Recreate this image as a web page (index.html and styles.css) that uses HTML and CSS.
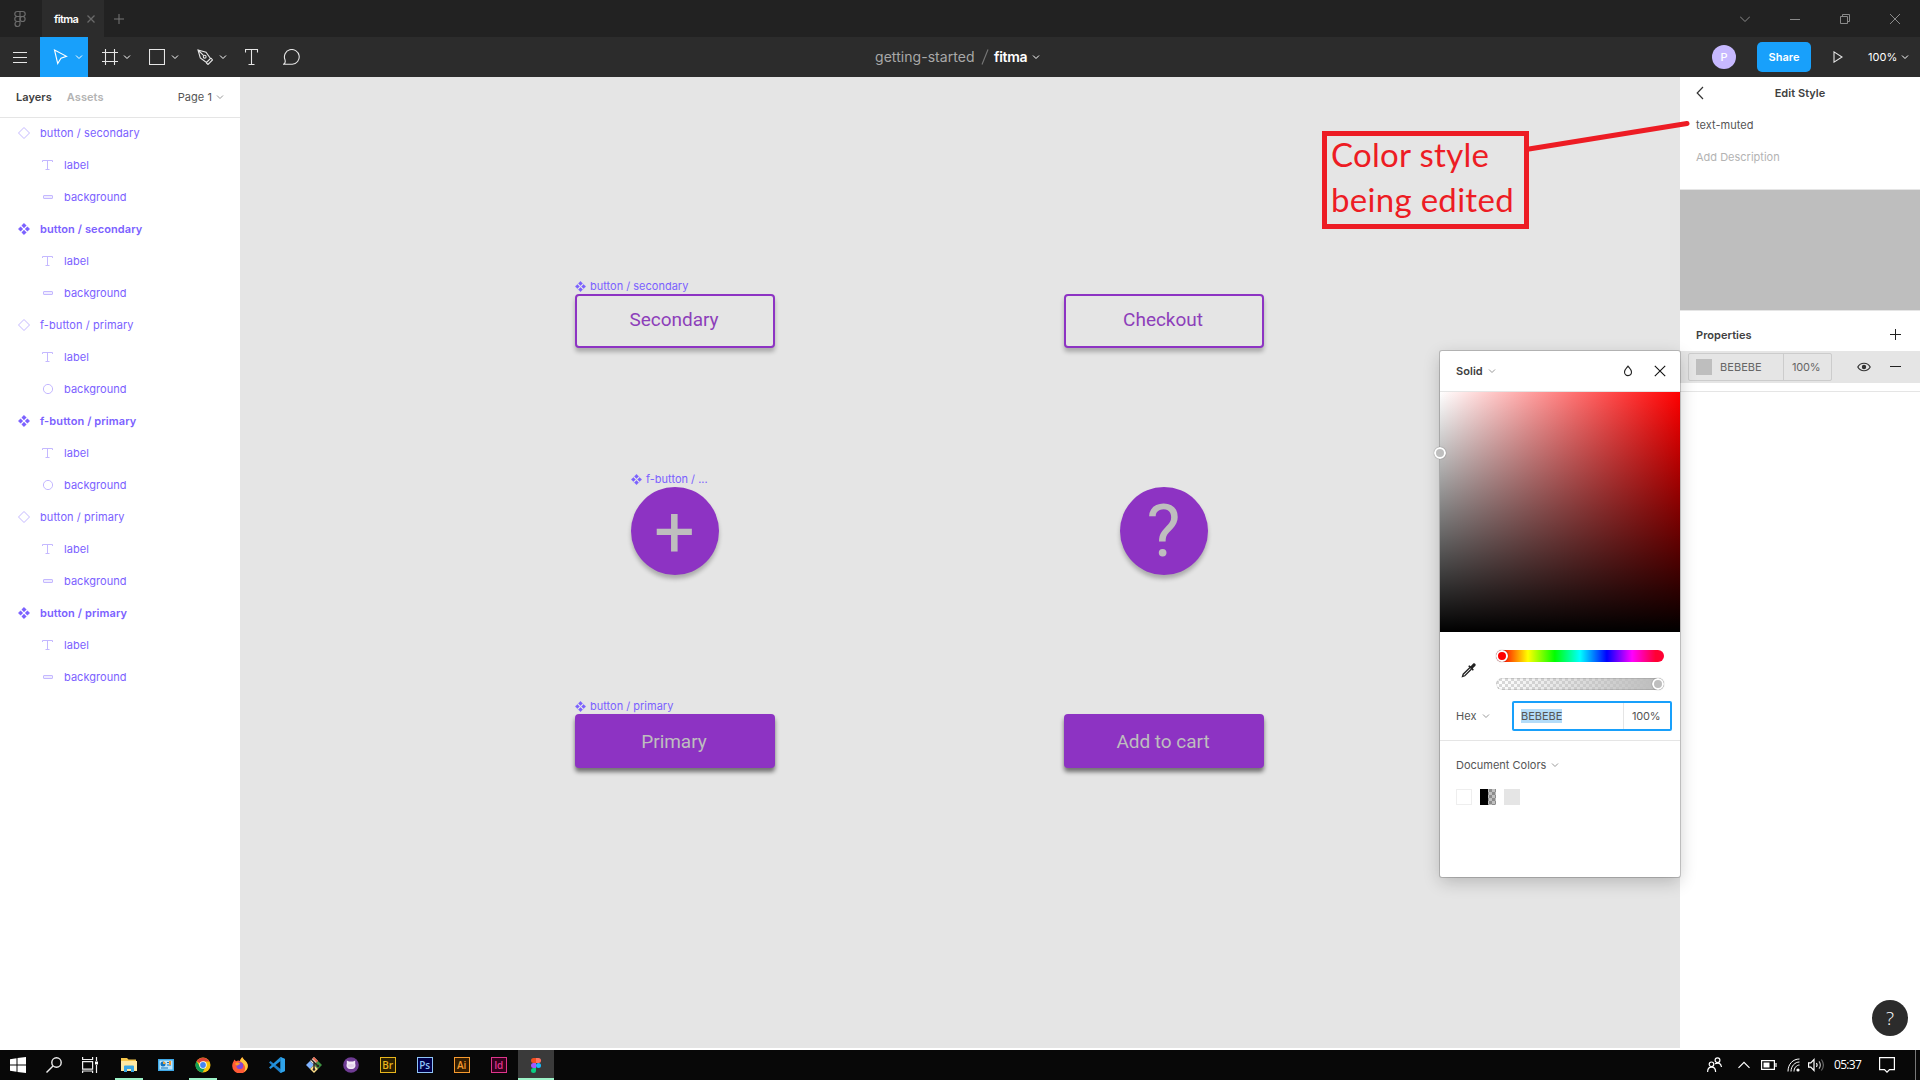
FILE: index.html
```html
<!DOCTYPE html>
<html lang="en">
<head>
<meta charset="utf-8">
<title>fitma</title>
<link rel="stylesheet" href="styles.css">
</head>
<body>
<svg class="defs" width="0" height="0">
  <symbol id="chev" viewBox="0 0 8 8"><path d="M1 2.500 4 5.500 7 2.500" fill="none" stroke="currentColor"/></symbol>
  <symbol id="inst" viewBox="0 0 14 14"><path d="M7 1.500 12.500 7 7 12.500 1.500 7Z" fill="none" stroke="currentColor"/></symbol>
  <symbol id="comp" viewBox="0 0 12 12"><path d="M6 .3 8.300 2.600 6 4.900 3.700 2.600ZM6 7.100 8.300 9.400 6 11.700 3.700 9.400ZM2.600 3.700 4.900 6 2.600 8.300 .3 6ZM9.400 3.700 11.700 6 9.400 8.300 7.100 6Z" fill="currentColor" stroke="currentColor" stroke-width=".4" stroke-linejoin="round"/></symbol>
  <symbol id="text" viewBox="0 0 12 12"><path d="M.5 3V1.500H10.500V3M5.500 1.500V10.500M3.500 10.500H7.500" fill="none" stroke="currentColor"/></symbol>
  <symbol id="rect" viewBox="0 0 12 12"><rect x="1.500" y="4.500" width="9" height="3" rx=".5" fill="#f0edff" stroke="currentColor"/></symbol>
  <symbol id="oval" viewBox="0 0 12 12"><circle cx="6" cy="6" r="4.600" fill="none" stroke="currentColor"/></symbol>
</svg>

<header class="tabs">
  <div class="home"><svg width="14" height="18" viewBox="0 0 14 18" fill="none" stroke="#6b6b6b" stroke-width="1.200"><path d="M7 1.500H4.300a2.500 2.500 0 0 0 0 5H7zM7 1.500h2.700a2.500 2.500 0 0 1 0 5H7zM7 6.500H4.300a2.500 2.500 0 0 0 0 5H7zM7 11.500H4.300A2.500 2.500 0 1 0 7 14z"/><circle cx="9.600" cy="9" r="2.500"/></svg></div>
  <div class="tab"><span>fitma</span><svg width="8" height="8" viewBox="0 0 8 8" stroke="#6a6a6a" stroke-width="1.300"><path d="M.5.5l7 7M7.500.5l-7 7"/></svg></div>
  <svg class="newtab" width="10" height="10" viewBox="0 0 10 10" stroke="#777"><path d="M5 0v10M0 5h10"/></svg>
  <div class="winbtns">
    <svg width="10" height="10" viewBox="0 0 10 10"><path d="M0 2.500 5 7.500 10 2.500"/></svg>
    <svg width="10" height="10" viewBox="0 0 10 10"><path d="M0 5.500h10"/></svg>
    <svg width="10" height="10" viewBox="0 0 10 10"><path d="M.5 2.500h7v7h-7zM2.500 2.500v-2h7v7h-2"/></svg>
    <svg width="10" height="10" viewBox="0 0 10 10"><path d="M0 0l10 10M10 0L0 10"/></svg>
  </div>
</header>

<nav class="toolbar">
  <div class="tool narrow"><svg width="14" height="12" viewBox="0 0 14 12"><path d="M0 1.500h14M0 6.500h14M0 11.500h14"/></svg></div>
  <div class="tool active"><svg width="16" height="16" viewBox="0 0 16 16"><path d="M1.500 1 13.500 7.300 8 9.200 4.700 14.500Z"/></svg><svg class="chev" width="8" height="8"><use href="#chev"/></svg></div>
  <div class="tool frame"><svg width="16" height="16" viewBox="0 0 16 16"><path d="M3.500 0v16M12.500 0v16M0 3.500h16M0 12.500h16"/></svg><svg class="chev" width="8" height="8"><use href="#chev"/></svg></div>
  <div class="tool"><svg width="16" height="16" viewBox="0 0 16 16"><path d="M.5.5h15v15H.5z"/></svg><svg class="chev" width="8" height="8"><use href="#chev"/></svg></div>
  <div class="tool"><svg width="16" height="16" viewBox="0 0 16 16"><path d="M1 1l8 2.300 4.500 6.200-4 4L3.300 9zM1 1l5.700 5.700M14 9l1.500 2-4.500 4.500-1.800-1.700"/><circle cx="7.700" cy="7.700" r="1.400"/></svg><svg class="chev" width="8" height="8"><use href="#chev"/></svg></div>
  <div class="tool narrow"><svg width="14" height="16" viewBox="0 0 14 16"><path d="M.5 3.500V.5h12v3M6.500.5v15M3.500 15.500h6"/></svg></div>
  <div class="tool narrow"><svg width="18" height="16" viewBox="0 0 18 16"><path d="M.6 15.300c1.800-1.200 2-2.500 1.400-4.500A7.400 7.400 0 1 1 9.300 15.300Z"/></svg></div>
  <div class="title"><span class="proj">getting-started</span><svg width="8" height="16" viewBox="0 0 8 16"><path d="M1 15.500 7 .5" stroke="#6e6e6e"/></svg><span class="file">fitma</span><svg class="chev" width="8" height="8"><use href="#chev"/></svg></div>
  <div class="acts">
    <span class="avatar">P</span>
    <span class="share">Share</span>
    <svg class="play" width="10" height="12" viewBox="0 0 10 12"><path d="M1 .9 9 6 1 11.100Z"/></svg>
    <span class="zoom">100%</span>
    <svg class="chev" width="8" height="8"><use href="#chev"/></svg>
  </div>
</nav>

<main class="work">
  <aside class="left">
    <div class="lhead"><b>Layers</b><b class="dim">Assets</b><span class="page">Page 1<svg width="8" height="8"><use href="#chev"/></svg></span></div>
    <ul class="layers">
      <li class="top"><svg width="14" height="14"><use href="#inst"/></svg>button / secondary</li>
      <li><svg width="12" height="12"><use href="#text"/></svg>label</li>
      <li><svg width="12" height="12"><use href="#rect"/></svg>background</li>
      <li class="top main"><svg width="12" height="12"><use href="#comp"/></svg>button / secondary</li>
      <li><svg width="12" height="12"><use href="#text"/></svg>label</li>
      <li><svg width="12" height="12"><use href="#rect"/></svg>background</li>
      <li class="top"><svg width="14" height="14"><use href="#inst"/></svg>f-button / primary</li>
      <li><svg width="12" height="12"><use href="#text"/></svg>label</li>
      <li><svg width="12" height="12"><use href="#oval"/></svg>background</li>
      <li class="top main"><svg width="12" height="12"><use href="#comp"/></svg>f-button / primary</li>
      <li><svg width="12" height="12"><use href="#text"/></svg>label</li>
      <li><svg width="12" height="12"><use href="#oval"/></svg>background</li>
      <li class="top"><svg width="14" height="14"><use href="#inst"/></svg>button / primary</li>
      <li><svg width="12" height="12"><use href="#text"/></svg>label</li>
      <li><svg width="12" height="12"><use href="#rect"/></svg>background</li>
      <li class="top main"><svg width="12" height="12"><use href="#comp"/></svg>button / primary</li>
      <li><svg width="12" height="12"><use href="#text"/></svg>label</li>
      <li><svg width="12" height="12"><use href="#rect"/></svg>background</li>
    </ul>
  </aside>

  <section class="canvas">
    <div class="tag t1"><svg width="11" height="11"><use href="#comp"/></svg>button / secondary</div>
    <div class="btn outline b1">Secondary</div>
    <div class="btn outline b2">Checkout</div>
    <div class="tag t2"><svg width="11" height="11"><use href="#comp"/></svg>f-button / ...</div>
    <div class="fab f1">+</div>
    <div class="fab f2">?</div>
    <div class="tag t3"><svg width="11" height="11"><use href="#comp"/></svg>button / primary</div>
    <div class="btn solid b3">Primary</div>
    <div class="btn solid b4">Add to cart</div>
    <div class="note"><span class="n1">Color style</span><span class="n2">being edited</span></div>
  </section>

  <aside class="right">
    <div class="rhead"><svg width="8" height="14" viewBox="0 0 8 14"><path d="M7 1 1.200 7 7 13" fill="none" stroke="#333" stroke-width="1.200"/></svg><b>Edit Style</b></div>
    <div class="field">text-muted</div>
    <div class="field desc">Add Description</div>
    <div class="preview"></div>
    <div class="phead"><b>Properties</b><svg width="12" height="12" viewBox="0 0 12 12" stroke="#222"><path d="M0 6.500h11M5.500 1v11"/></svg></div>
    <div class="prow">
      <div class="pin"><i></i><span class="hex">BEBEBE</span><span class="pct">100%</span></div>
      <svg class="eye" width="14" height="10" viewBox="0 0 14 10"><path d="M.8 5C3.500 0 10.500 0 13.200 5 10.500 10 3.500 10 .8 5Z" fill="none" stroke="#333" stroke-width="1.200"/><circle cx="7" cy="5" r="2.200" fill="#333"/></svg>
      <svg width="12" height="12" viewBox="0 0 12 12" stroke="#222"><path d="M0 5.500h11"/></svg>
    </div>
    <div class="help">?</div>
  </aside>

  <section class="picker">
    <div class="pkhead"><b>Solid</b><svg class="chv" width="8" height="8"><use href="#chev"/></svg><svg class="drop" width="10" height="12" viewBox="0 0 10 12"><path d="M5 1.200C6.500 3 8.500 4.700 8.500 7.100a3.500 3.500 0 0 1-7 0C1.500 4.700 3.500 3 5 1.200Z" fill="none" stroke="#222" stroke-width="1.100"/></svg><svg width="12" height="12" viewBox="0 0 12 12" stroke="#111" stroke-width="1.100"><path d="M.8.8l10.400 10.400M11.200.8.8 11.200"/></svg></div>
    <div class="field2d"><i class="knob grayk"></i></div>
    <div class="sliders">
      <svg width="16" height="16" viewBox="0 0 16 16"><path d="M9 5.500 2.200 12.200 1.500 14.500 3.800 13.800 10.500 7" fill="none" stroke="#222" stroke-width="1.300"/><path d="M7.200 4.200l1-1 1.500 1L12 1.700c1.500-1.400 3.700.8 2.300 2.300L11.800 6.300l1 1.500-1 1z" fill="#222"/></svg>
      <div class="bars"><div class="hue"><i class="knob redk"></i></div><div class="alpha"><i class="knob endk"></i></div></div>
    </div>
    <div class="hexrow"><span>Hex</span><svg class="chv" width="8" height="8"><use href="#chev"/></svg><div class="hexin"><span class="sel">BEBEBE</span><span class="opa">100%</span></div></div>
    <div class="dochead">Document Colors<svg class="chv" width="8" height="8"><use href="#chev"/></svg></div>
    <div class="swatches"><i class="s1"></i><i class="s2"></i><i class="s3"></i></div>
  </section>
  <svg class="pointer" width="170" height="40" viewBox="0 0 170 40"><path d="M3 32 161 6.500" stroke="#ed1c24" stroke-width="5" stroke-linecap="round"/></svg>
</main>

<footer class="taskbar">
  <div class="start"><svg width="16" height="16" viewBox="0 0 16 16" fill="#fff"><path d="M0 2.200 6.500 1.300V7.500H0zM7.500 1.100 16 0V7.500H7.500zM0 8.500H6.500v6.200L0 13.800zM7.500 8.500H16V16L7.500 14.900z"/></svg></div>
  <div class="start"><svg width="16" height="16" viewBox="0 0 16 16" fill="none" stroke="#eee" stroke-width="1.400"><circle cx="10.500" cy="5.500" r="4.700"/><path d="M7 9 .5 15.500"/></svg></div>
  <div class="start"><svg width="16" height="16" viewBox="0 0 16 16" fill="none" stroke="#eee" stroke-width="1.200"><path d="M.6 0v2.500h10V0M.6 4.600h10v7.500H.6zM.6 16v-2h10v2M14.500 0v4M14.500 8v8"/><path d="M13 4.500h3v3h-3z" fill="#fff" stroke="none"/></svg></div>
  <div class="app run first"><svg width="16" height="16" viewBox="0 0 16 16"><path d="M0 1h6l1.500 1.500H15V14H0z" fill="#f6c64b"/><path d="M0 4h16v10H0z" fill="#ffe9a2"/><path d="M3 15V9.500q0-1 1-1h8q1 0 1 1V15h-3v-3H6v3z" fill="#3aa7e4"/></svg></div>
  <div class="app"><svg width="16" height="14" viewBox="0 0 16 14"><path d="M0 1h16v12H0z" fill="#3fa9e8"/><path d="M1.500 2.500h13v9h-13z" fill="#bfe6fb"/><circle cx="5" cy="6" r="2.500" fill="#1274be"/><path d="M5 6V3.500A2.500 2.500 0 0 1 7.500 6z" fill="#f0a63c"/><path d="M9 4h4v1H9zM9 6.500h4v1H9zM3 9.500h7v1H3z" fill="#1274be"/><path d="M11 3h2v4h-2z" fill="#f29c38"/></svg></div>
  <div class="app run"><svg width="16" height="16" viewBox="0 0 16 16"><circle cx="8" cy="8" r="7.500" fill="#f4c20d"/><path d="M8 8 1.500 4.300A7.500 7.500 0 0 1 14.500 4.500H8z" fill="#db4437"/><path d="M1.500 4.200A7.500 7.500 0 0 0 7.500 15.500L10.500 10 5 9.500z" fill="#0f9d58"/><circle cx="8" cy="8" r="3.700" fill="#fff"/><circle cx="8" cy="8" r="2.900" fill="#4285f4"/></svg></div>
  <div class="app"><svg width="16" height="16" viewBox="0 0 16 16"><path d="M2.300 2.500 4 4.300C6 3 7.500 3.500 8 4 8.500 2 9.500.8 10.500.2 11 3 15.800 4 15.800 9A7.800 7.500 0 0 1 .2 9C.2 6 1.500 5 2.300 2.500Z" fill="#ff5a36"/><path d="M10.500.2C11 3 15.800 4 15.800 9c0 3-2 5-4 6 3-4 1-8-3.800-11 .5-1.800 1.500-3.200 2.500-3.800Z" fill="#ffc93a"/><circle cx="7.800" cy="8.700" r="3.400" fill="#8048d8"/><path d="M3.500 6c2-1 4 0 5 1-2 0-2 2-4 1.500C3.500 8 3 7 3.500 6Z" fill="#ff9a27"/></svg></div>
  <div class="app"><svg width="16" height="16" viewBox="0 0 16 16"><path d="M11.500 0 16 2v12l-4.500 2L0 5.500 1.500 4 11.500 12z" fill="#1e7fc8"/><path d="M11.500 0V4L1.500 12 0 10.500z" fill="#2392dc"/><path d="M11.500 0 16 2v12l-4.500 2z" fill="#2fa3ea"/></svg></div>
  <div class="app"><svg width="16" height="16" viewBox="0 0 16 16"><path d="M8 0l4 4-4 4-4-4z" fill="#efe8d6"/><path d="M4 4l4 4-4 4-4-4z" fill="#80b3ff"/><path d="M12 4l4 4-4 4-4-4z" fill="#3f9142"/><path d="M8 8l4 4-4 4-4-4z" fill="#ffe08a"/><path d="M4.500 1.800 12 9M8 5v8" stroke="#2c2222" stroke-width="1.400"/><path d="M8 0 12 4 10.500 5.500 6.500 1.500z" fill="#e8674f"/><circle cx="8" cy="12.500" r="1.300" fill="#2c2222"/><circle cx="12" cy="9" r="1.300" fill="#2c2222"/></svg></div>
  <div class="app"><svg width="16" height="16" viewBox="0 0 16 16"><circle cx="8" cy="8" r="7.800" fill="#6e3b93"/><path d="M3.800 3.500 6 4.500h4l2.200-1v3.200c1 3-.6 5.300-4.200 5.300S2.800 9.700 3.800 6.700z" fill="#f2e9f6"/><path d="M4.700 7.500q3.300-1 6.600 0 .5 3-3.300 3t-3.300-3z" fill="#e2d0ea"/></svg></div>
  <div class="app"><span class="adobe br">Br</span></div>
  <div class="app"><span class="adobe ps">Ps</span></div>
  <div class="app"><span class="adobe ai">Ai</span></div>
  <div class="app"><span class="adobe id">Id</span></div>
  <div class="app run cur"><svg width="10" height="15" viewBox="0 0 10 15"><path d="M5 0H2.500a2.500 2.500 0 0 0 0 5H5z" fill="#f24e1e"/><path d="M5 0h2.500a2.500 2.500 0 0 1 0 5H5z" fill="#ff7262"/><path d="M5 5H2.500a2.500 2.500 0 0 0 0 5H5z" fill="#a259ff"/><circle cx="7.500" cy="7.500" r="2.500" fill="#1abcfe"/><path d="M5 10H2.500A2.500 2.500 0 1 0 5 12.500z" fill="#0acf83"/></svg></div>
  <div class="tray">
    <svg width="16" height="16" viewBox="0 0 16 16"><circle cx="4.500" cy="7.300" r="2.300"/><path d="M.6 15c0-6.500 8-6.500 8 0"/><circle cx="10.500" cy="3.200" r="2.400"/><path d="M8 6.800q5.500-2.500 6.500 3.200"/></svg>
    <svg class="up" width="12" height="8" viewBox="0 0 12 8"><path d="M.5 6.800 6 1.300l5.500 5.500"/></svg>
    <svg class="bat" width="16" height="10" viewBox="0 0 16 10"><path d="M.6.6h12.800v8.800H.6zM15 3v4"/><path d="M2.500 2.500h6v5h-6z" fill="#fff" stroke="none"/></svg>
    <svg class="wifi" width="13" height="14" viewBox="0 0 13 14"><path d="M1 13.500C1 6 6 1 12.500 1M4 13.500C4 8 8 4 12.500 4M7 13.500C7 10 9.500 7 12.500 7"/><circle cx="11" cy="12" r="1.600" fill="#fff" stroke="none"/></svg>
    <svg class="vol" width="17" height="14" viewBox="0 0 17 14"><path d="M.6 4.800h2.200L6 1.500v11L2.800 9.200H.6z"/><path d="M8.500 5q1.300 2 0 4"/><path d="M11 3.300q2.700 3.700 0 7.400" stroke="#bbb"/><path d="M13.400 1.500q4 5.500 0 11" stroke="#666"/></svg>
    <span class="clock">05:37</span>
    <svg class="notif" width="16" height="16" viewBox="0 0 16 16"><path d="M.6.6h14.800v12H10.500L8 15.200 5.500 12.600H.6z"/></svg>
    <i class="edge"></i>
  </div>
</footer>
</body>
</html>
```
FILE: styles.css
```css
* { box-sizing: border-box; }
body { margin: 0; width: 1920px; height: 1080px; overflow: hidden; display: flex; flex-direction: column; font-family: Inter, "Liberation Sans", sans-serif; font-size: 11px; line-height: 16px; letter-spacing: .05px; color: #555; background: #fff; }
.defs { position: absolute; }
svg { display: block; flex: none; }
b { font-weight: 600; color: #404040; }

.tabs { height: 37px; background: #222; display: flex; align-items: center; flex: none; }
.home { width: 42px; display: flex; justify-content: center; padding-right: 2px; }
.tab { width: 62px; height: 37px; background: #2c2c2c; display: flex; align-items: center; padding: 1px 0 0 12px; color: #fff; font-weight: 600; letter-spacing: -.6px; }
.tab span { width: 33px; }
.newtab { margin: 1px 0 0 10px; }
.winbtns { margin-left: auto; display: flex; gap: 40px; padding-right: 20px; }
.winbtns path { fill: none; stroke: #8a8a8a; }

.toolbar { height: 40px; background: #2c2c2c; display: flex; flex: none; color: #fff; position: relative; }
.toolbar path, .toolbar circle { fill: none; stroke: #e6e6e6; stroke-width: 1.100; }
.tool { width: 48px; display: flex; align-items: center; gap: 6px; padding-left: 13px; }
.tool.frame { gap: 5px; padding-left: 14px; }
.tool.narrow { width: 40px; justify-content: center; padding-left: 0; }
.tool.active { background: #18a0fb; }
.tool.active path { stroke: #fff; }
.title { position: absolute; left: 875px; top: 0; height: 40px; display: flex; align-items: center; font-size: 14px; }
.proj { width: 106px; color: #a8a8a8; letter-spacing: .05px; }
.title svg path { stroke: #777; }
.title svg.chev { color: #fff; }
.file { font-weight: 600; margin-left: 5px; width: 38px; letter-spacing: -.3px; }
.acts { margin-left: auto; display: flex; align-items: center; padding-right: 11px; }
.avatar { width: 24px; height: 24px; border-radius: 50%; background: #c7b9ff; display: flex; align-items: center; justify-content: center; font-weight: 500; margin-right: 21px; }
.share { width: 54px; height: 30px; border-radius: 5px; background: #18a0fb; display: flex; align-items: center; justify-content: center; font-weight: 600; margin-right: 22px; }
.play { margin-right: 25px; }
.zoom { width: 33px; }

.work { height: 973px; display: flex; position: relative; flex: none; }
.left { width: 240px; background: #fff; flex: none; }
.lhead { height: 40px; display: flex; align-items: center; padding: 0 16px; box-shadow: 0 1px #e5e5e5; }
.lhead .dim { color: #b3b3b3; margin-left: 15px; }
.page { margin-left: auto; display: flex; align-items: center; gap: 4px; }
.page svg { color: #999; }
.layers { list-style: none; margin: 0; padding: 0; color: #7b61ff; }
.layers li { height: 32px; display: flex; align-items: center; padding-left: 42px; gap: 10px; }
.layers li svg { color: #c4b8ff; }
.layers li.top { padding-left: 17px; gap: 9px; letter-spacing: .08px; }
.layers li.main { padding-left: 18px; gap: 10px; font-weight: 600; letter-spacing: .1px; }
.layers li.main svg { color: #7b61ff; }

.canvas { width: 1440px; height: 971px; background: #e5e5e5; position: relative; flex: none; }
.tag { position: absolute; display: flex; align-items: center; gap: 4px; color: #7b61ff; letter-spacing: 0; }
.t1 { left: 335px; top: 201px; }
.t2 { left: 391px; top: 394px; }
.t3 { left: 335px; top: 621px; }
.btn { position: absolute; width: 200px; height: 54px; border-radius: 4px; display: flex; align-items: center; justify-content: center; font-family: Roboto, sans-serif; font-size: 19px; letter-spacing: -.03px; padding: 0 2px 3px 0; }
.outline { border: 2px solid #8d33c3; color: #8d3fba; box-shadow: 0 4px 4px rgba(0,0,0,.25); background: #e5e5e5; }
.solid { background: #8d33c3; color: #bebebe; padding: 2px 2px 0 0; box-shadow: 0 4px 4px rgba(0,0,0,.5); }
.b1 { left: 335px; top: 217px; }
.b2 { left: 824px; top: 217px; }
.b3 { left: 335px; top: 637px; }
.b4 { left: 824px; top: 637px; }
.fab { position: absolute; top: 410px; width: 88px; height: 88px; border-radius: 50%; background: #8d33c3; color: #bebebe; font: 72px/90px Roboto, sans-serif; text-align: center; padding-right: 1px; box-shadow: 0 4px 4px rgba(0,0,0,.25); }
.f1 { left: 391px; }
.f2 { left: 880px; }
.note { position: absolute; left: 1082px; top: 54px; width: 207px; height: 98px; border: 5px solid #ed1c24; color: #ed1c24; font: 33px/45px Lato, sans-serif; letter-spacing: .3px; padding-left: 4px; display: flex; flex-direction: column; white-space: nowrap; }
.note span { margin-top: -4px; margin-bottom: 4px; }
.pointer { position: absolute; left: 1526px; top: 40px; }

.right { width: 240px; background: #fff; flex: none; position: relative; }
.rhead { height: 32px; display: flex; align-items: center; padding: 0 24px 0 16px; }
.rhead b { flex: 1; text-align: center; }
.field { height: 32px; padding: 8px 16px; }
.desc { color: #b3b3b3; height: 48px; letter-spacing: 0; }
.preview { height: 122px; background: #bebebe; border: solid #e5e5e5; border-width: 1px 0; }
.phead { height: 40px; display: flex; align-items: center; justify-content: space-between; padding: 8px 18px 0 16px; }
.phead svg { margin-top: -2px; }
.prow { height: 32px; background: #e5e5e5; display: flex; align-items: center; padding: 0 18px 0 8px; box-shadow: 0 8px #fff, 0 9px #e5e5e5; }
.pin { width: 144px; height: 28px; border: 1px solid #ccc; border-radius: 2px; display: flex; align-items: center; padding-left: 7px; color: #666; }
.pin i { width: 16px; height: 16px; background: #bebebe; margin-right: 8px; }
.hex { width: 63px; }
.pct { border-left: 1px solid #ccc; height: 26px; line-height: 26px; padding-left: 8px; letter-spacing: -.2px; }
.eye { margin: 0 19px 0 25px; }
.help { position: absolute; left: 192px; top: 923px; width: 36px; height: 36px; border-radius: 50%; background: #2c2c2c; color: #fff; font: 300 19px/36px "Open Sans", sans-serif; text-align: center; }

.picker { position: absolute; left: 1440px; top: 274px; width: 240px; height: 526px; background: #fff; border-radius: 2px; box-shadow: 0 0 0 1px rgba(0,0,0,.18), 0 5px 17px rgba(0,0,0,.2); }
.pkhead { height: 41px; display: flex; align-items: center; padding: 0 14px 1px 16px; border-bottom: 1px solid #e5e5e5; }
.chv { color: #999; margin-left: 5px; }
.drop { margin: 0 21px 0 auto; }
.field2d { height: 240px; position: relative; background: linear-gradient(to top, #000, transparent), linear-gradient(to right, #fff, #f00); }
.knob { position: absolute; width: 12px; height: 12px; border: 2px solid #fff; border-radius: 50%; box-shadow: 0 0 1px 0 rgba(0,0,0,.6); }
.grayk { background: #bebebe; left: -6px; top: 55px; }
.redk { background: #f00; left: 0; top: 0; }
.endk { background: #bebebe; right: 0; top: 0; }
.sliders { height: 69px; padding: 18px 16px 0 21px; display: flex; justify-content: space-between; }
.sliders > svg { margin-top: 12px; }
.bars { width: 168px; display: flex; flex-direction: column; gap: 16px; }
.hue, .alpha { height: 12px; border-radius: 6px; position: relative; }
.hue { background: linear-gradient(to right, #f00 3.500%, #ff0 19%, #0f0 35%, #0ff 50%, #00f 66%, #f0f 81%, #f03 95%); }
.alpha { background: linear-gradient(to right, transparent, #bebebe 94%), repeating-conic-gradient(#d9d9d9 0 25%, #fff 0 50%) 0 0 / 6px 6px; box-shadow: inset 0 0 0 1px rgba(0,0,0,.1); }
.hexrow { height: 40px; display: flex; align-items: center; padding: 0 8px 10px 16px; border-bottom: 1px solid #e5e5e5; }
.hexin { width: 160px; height: 30px; margin-left: auto; border: 2px solid #18a0fb; border-radius: 2px; display: flex; align-items: center; padding-left: 7px; }
.sel { background: #b3dcf9; line-height: 14px; letter-spacing: 0; }
.opa { margin-left: auto; width: 47px; border-left: 1px solid #e5e5e5; line-height: 26px; padding-left: 8px; letter-spacing: -.2px; }
.dochead { height: 48px; display: flex; align-items: center; padding: 0 16px; letter-spacing: 0; }
.swatches { display: flex; gap: 8px; padding: 0 16px; }
.swatches i { width: 16px; height: 16px; }
.s1 { border: 1px solid #eee; }
.s2 { background: linear-gradient(to right, #000 50%, rgba(0,0,0,.25) 50%), repeating-conic-gradient(#bbb 0 25%, #fff 0 50%) 0 0 / 6px 6px; }
.s3 { background: #e5e5e5; }

.taskbar { height: 30px; background: #080808; display: flex; flex: none; }
.start { width: 36px; display: flex; align-items: center; justify-content: center; }
.app { width: 37px; display: flex; align-items: center; justify-content: center; background: linear-gradient(#9df3c8, #9df3c8) center bottom / 0 2px no-repeat; }
.first { margin-left: 2px; }
.run { background-size: 28px 2px; }
.cur { width: 36px; margin-left: 1px; background-color: #3a3a3a; background-size: 36px 2px; }
.adobe { width: 16px; height: 16px; border: 1px solid; font: 600 10px/14px "Open Sans", sans-serif; letter-spacing: -.3px; text-align: center; }
.br { color: #e8b51c; background: #2b2000; }
.ps { color: #8fc5f7; background: #00004a; }
.ai { color: #f79a2e; background: #331c00; }
.id { color: #e0358c; background: #33001c; }
.tray { margin-left: auto; display: flex; align-items: center; height: 30px; }
.tray svg { fill: none; stroke: #fff; stroke-width: 1.200; }
.up { margin-left: 15px; }
.bat { margin-left: 11px; }
.tray .wifi { margin-left: 10px; stroke-width: 1; }
.vol { margin-left: 8px; }
.clock { color: #fff; font: 12px/30px "Open Sans", sans-serif; letter-spacing: -.7px; margin-left: 9px; width: 45px; }
.edge { width: 1px; height: 30px; background: #777; margin: 0 4px 0 20px; }
```
